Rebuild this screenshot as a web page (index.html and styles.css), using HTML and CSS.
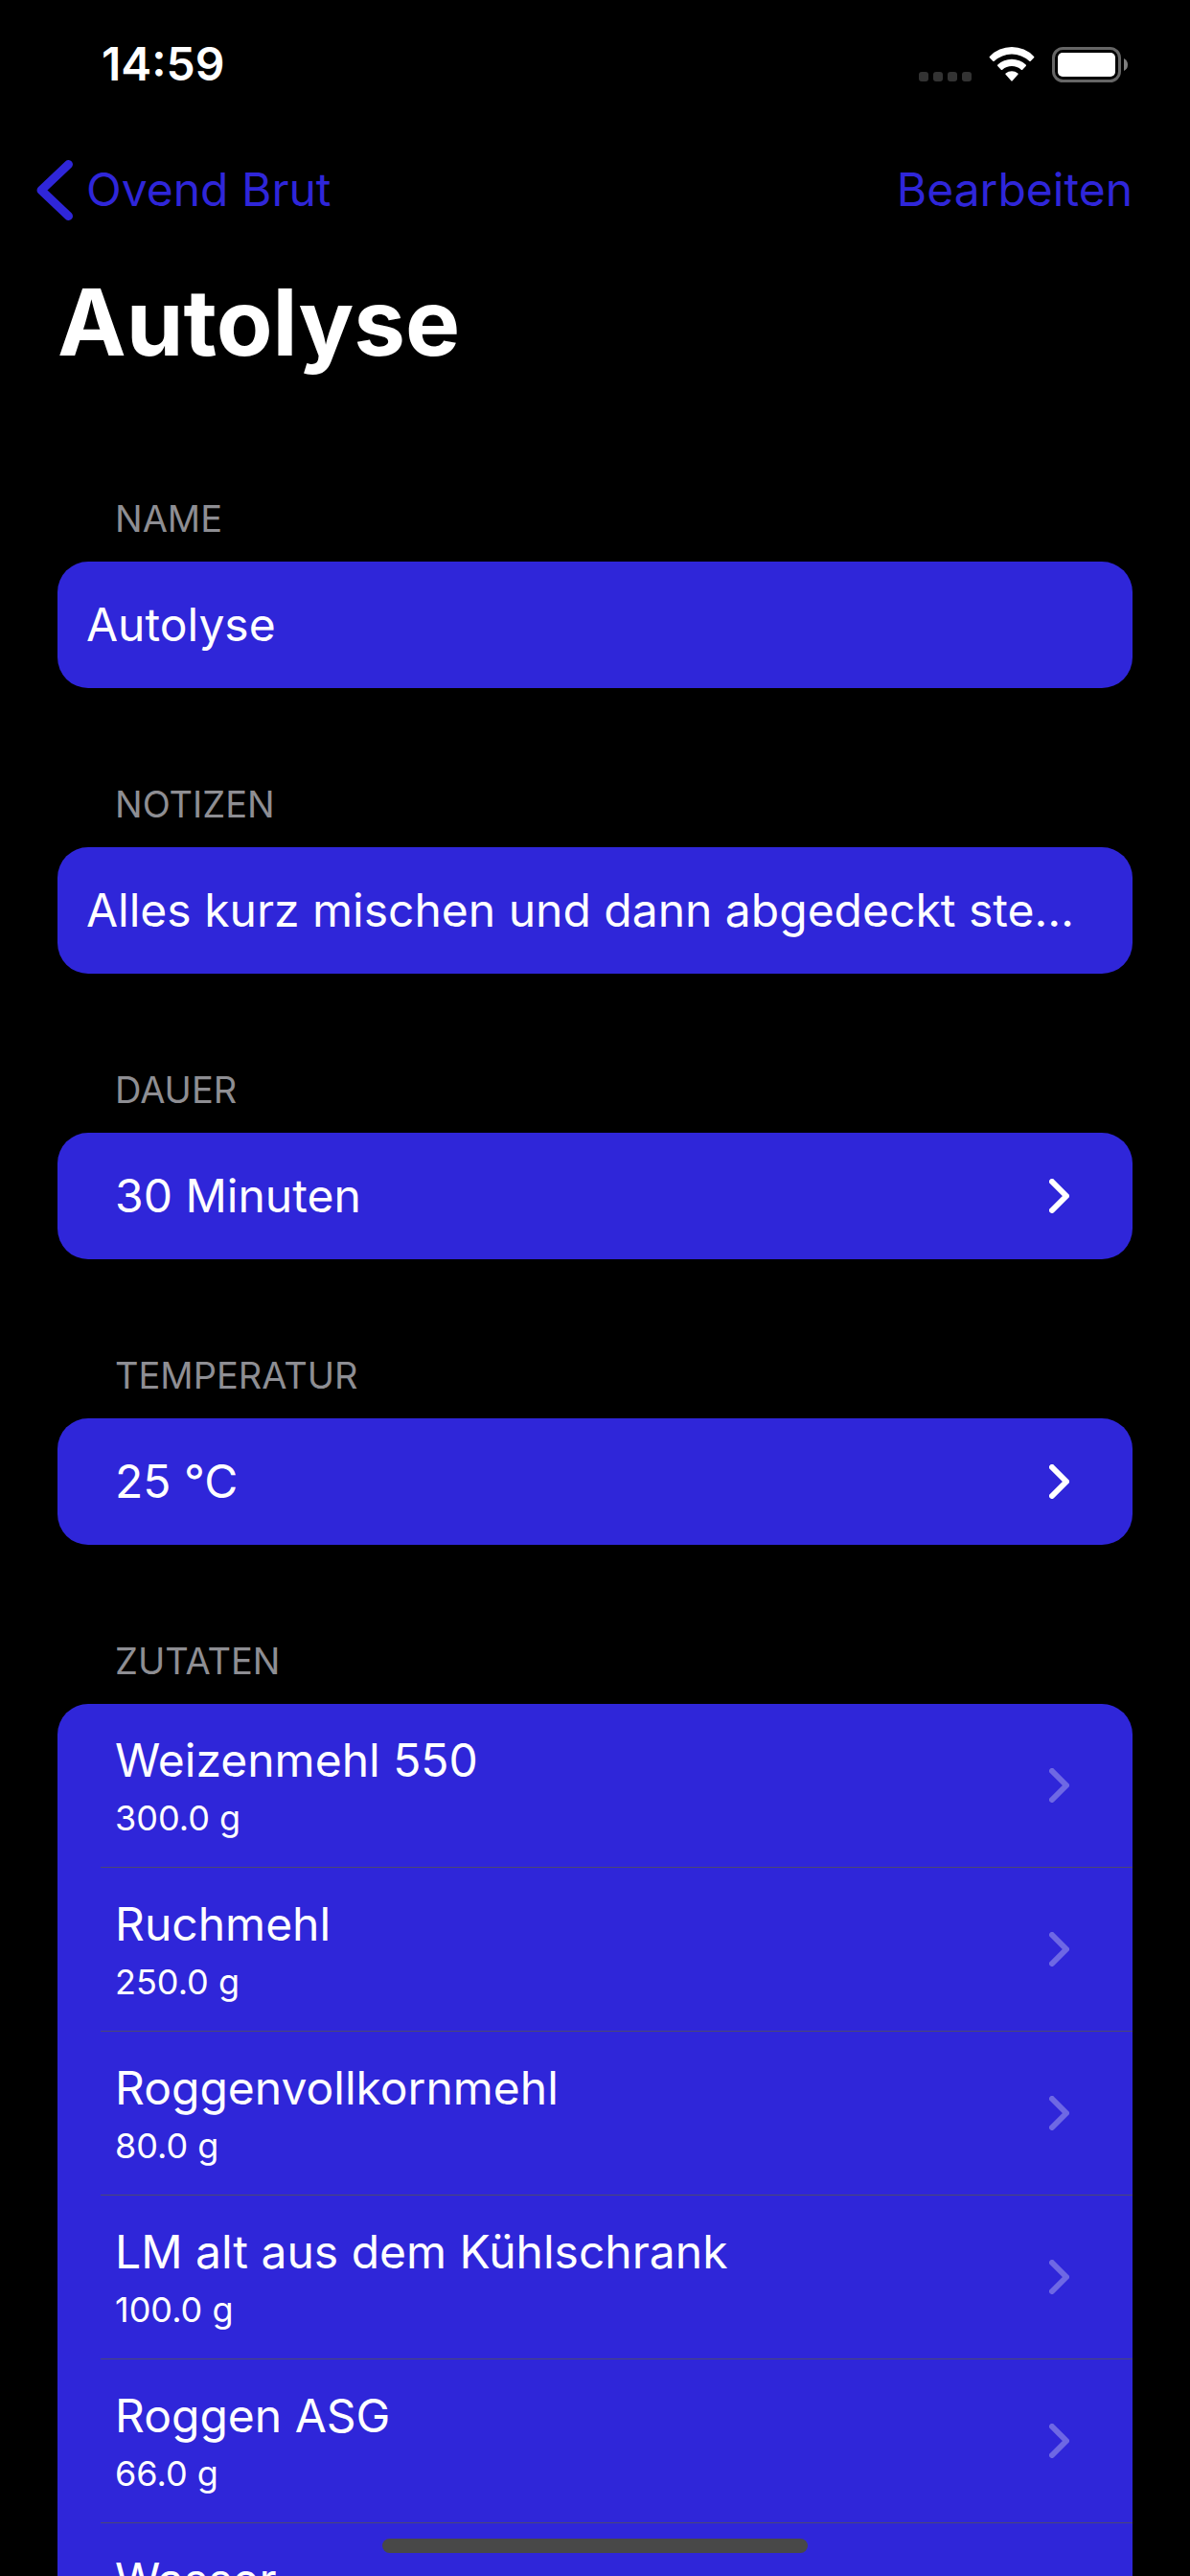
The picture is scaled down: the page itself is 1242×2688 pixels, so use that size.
FILE: index.html
```html
<!DOCTYPE html>
<html lang="de">
<head>
<meta charset="utf-8">
<meta name="viewport" content="width=device-width, initial-scale=1">
<title>Autolyse</title>
<link rel="stylesheet" href="styles.css">
</head>
<body>
<svg class="defs" aria-hidden="true">
  <symbol id="chevron" viewBox="0 0 21 36"><path d="M3 3 18 18 3 33"/></symbol>
</svg>
<div class="screen">
  <div class="status">
    <time class="clock">14:59</time>
    <div class="indicators">
      <svg class="cell" viewBox="0 0 55 36" aria-hidden="true">
        <rect x="0" y="26" width="10" height="10" rx="3"/><rect x="15" y="26" width="10" height="10" rx="3"/><rect x="30" y="26" width="10" height="10" rx="3"/><rect x="45" y="26" width="10" height="10" rx="3"/>
      </svg>
      <svg class="wifi" viewBox="0 0 48 36" aria-hidden="true">
        <path d="M.9 9.9A32 32 0 0 1 47.1 9.9Q47.8 10.6 47.1 11.3L43.7 14.7Q43 15.3 42.3 14.7A27 27 0 0 0 5.7 14.7Q5 15.3 4.3 14.7L.9 11.3Q.2 10.6.9 9.9Z"/>
        <path d="M9.3 18.6A21.5 21.5 0 0 1 38.7 18.6Q39.4 19.3 38.7 20L35.2 23.8Q34.5 24.4 33.8 23.8A14.6 14.6 0 0 0 14.2 23.8Q13.5 24.4 12.8 23.8L9.3 20Q8.6 19.3 9.3 18.6Z"/>
        <path d="M17.6 27.4A10.5 10.5 0 0 1 30.4 27.4Q31.1 28.1 30.4 28.8L24.7 35.3Q24 36 23.3 35.3L17.6 28.8Q16.9 28.1 17.6 27.4Z"/>
      </svg>
      <svg class="battery" viewBox="0 0 79 37" aria-hidden="true">
        <rect class="shell" x="1.5" y="1.5" width="69" height="34" rx="10"/>
        <rect class="charge" x="6" y="6" width="60" height="25" rx="5"/>
        <path class="tip" d="M75 12Q79 14 79 18.5T75 25Z"/>
      </svg>
    </div>
  </div>

  <nav class="nav">
    <a class="back" href="#rezept">
      <svg class="back-icon" viewBox="0 0 38 63" aria-hidden="true"><path d="M33.5 4.500 5 31.500 33.500 58.500"/></svg>
      <span>Ovend Brut</span>
    </a>
    <button class="edit" type="button">Bearbeiten</button>
  </nav>

  <main class="content">
    <h1 class="title">Autolyse</h1>

    <section class="group">
      <label class="heading" for="name">NAME</label>
      <input class="card field" id="name" type="text" value="Autolyse">
    </section>

    <section class="group">
      <label class="heading" for="notes">NOTIZEN</label>
      <input class="card field" id="notes" type="text" value="Alles kurz mischen und dann abgedeckt ste…">
    </section>

    <section class="group">
      <h2 class="heading">DAUER</h2>
      <button class="card picker" type="button">30 Minuten<svg class="chevron" aria-hidden="true"><use href="#chevron"/></svg></button>
    </section>

    <section class="group">
      <h2 class="heading">TEMPERATUR</h2>
      <button class="card picker" type="button">25 °C<svg class="chevron" aria-hidden="true"><use href="#chevron"/></svg></button>
    </section>

    <section class="group">
      <h2 class="heading">ZUTATEN</h2>
      <ul class="card list">
        <li class="item"><a class="row" href="#weizenmehl"><span class="info"><span class="label">Weizenmehl 550</span><span class="amount">300.0 g</span></span><svg class="chevron faint" aria-hidden="true"><use href="#chevron"/></svg></a></li>
        <li class="item"><a class="row" href="#ruchmehl"><span class="info"><span class="label">Ruchmehl</span><span class="amount">250.0 g</span></span><svg class="chevron faint" aria-hidden="true"><use href="#chevron"/></svg></a></li>
        <li class="item"><a class="row" href="#roggenvollkornmehl"><span class="info"><span class="label">Roggenvollkornmehl</span><span class="amount">80.0 g</span></span><svg class="chevron faint" aria-hidden="true"><use href="#chevron"/></svg></a></li>
        <li class="item"><a class="row" href="#lm"><span class="info"><span class="label">LM alt aus dem Kühlschrank</span><span class="amount">100.0 g</span></span><svg class="chevron faint" aria-hidden="true"><use href="#chevron"/></svg></a></li>
        <li class="item"><a class="row" href="#roggen-asg"><span class="info"><span class="label">Roggen ASG</span><span class="amount">66.0 g</span></span><svg class="chevron faint" aria-hidden="true"><use href="#chevron"/></svg></a></li>
        <li class="item"><a class="row" href="#wasser"><span class="info"><span class="label">Wasser</span></span></a></li>
      </ul>
    </section>
  </main>
  <div class="home-indicator"></div>
</div>
</body>
</html>
```
FILE: styles.css
```css
:root {
  --accent: #2f26d9;
  --margin: 60px;
}

* {
  box-sizing: border-box;
}

body {
  margin: 0;
  background: #000;
  color: #fff;
  font: 400 48px/60px Inter, "Liberation Sans", sans-serif;
}

button,
input {
  font: inherit;
  color: inherit;
  border: 0;
}

a {
  color: inherit;
  text-decoration: none;
}

.defs {
  display: none;
}

.screen {
  position: relative;
  display: flex;
  flex-direction: column;
  height: 100vh;
  overflow: hidden;
}

/* Status bar */
.status {
  display: flex;
  flex: none;
  align-items: center;
  justify-content: space-between;
  height: 132px;
  padding: 2px 65px 0 106px;
}

.clock {
  font-weight: 600;
}

.indicators {
  display: flex;
  gap: 18px;
}

.cell {
  width: 55px;
  height: 36px;
  fill: #333;
}

.wifi {
  width: 48px;
  height: 36px;
  fill: #fff;
}

.battery {
  width: 79px;
  height: 37px;
}

.shell {
  fill: none;
  stroke: #666;
  stroke-width: 3;
}

.charge {
  fill: #fff;
}

.tip {
  fill: #808080;
}

/* Navigation bar */
.nav {
  display: flex;
  flex: none;
  align-items: center;
  justify-content: space-between;
  height: 132px;
  padding: 0 var(--margin) 0 38px;
  color: var(--accent);
}

.back {
  display: flex;
  align-items: center;
  gap: 14px;
}

.back-icon {
  width: 38px;
  height: 63px;
  fill: none;
  stroke: currentColor;
  stroke-width: 9;
  stroke-linecap: round;
  stroke-linejoin: round;
}

.edit {
  padding: 0;
  background: none;
}

/* Content */
.content {
  flex: 1;
  min-height: 0;
  padding: 12px var(--margin) 0;
  overflow-y: auto;
  scrollbar-width: none;
}

.title {
  margin: 0 0 24px;
  font-size: 96px;
  font-weight: 700;
  line-height: 120px;
}

.group {
  padding-top: 87px;
}

.heading {
  display: block;
  margin: 0;
  padding: 10px 60px 21px;
  color: #8e8e93;
  font-size: 38px;
  font-weight: 400;
  line-height: 48px;
}

.card {
  display: flex;
  width: 100%;
  border-radius: 32px;
  background: var(--accent);
}

.field {
  height: 132px;
  padding: 0 30px 2px;
}

.field:focus {
  outline: none;
}

.picker {
  align-items: center;
  justify-content: space-between;
  height: 132px;
  padding: 0 66px 0 60px;
  text-align: left;
}

.chevron {
  flex: none;
  width: 21px;
  height: 36px;
  fill: none;
  stroke: #fff;
  stroke-width: 6;
  stroke-linecap: round;
  stroke-linejoin: round;
}

.faint {
  opacity: 0.3;
}

.list {
  flex-direction: column;
  margin: 0;
  padding: 0;
  list-style: none;
}

.item {
  padding-left: 45px;
}

.row {
  display: flex;
  align-items: center;
  justify-content: space-between;
  min-height: 171px;
  padding: 0 66px 0 15px;
  border-bottom: 1px solid #4c4873;
}

.info {
  display: flex;
  flex-direction: column;
  gap: 8px;
  min-height: 112px;
}

.amount {
  font-size: 36px;
  line-height: 44px;
}

.home-indicator {
  position: absolute;
  bottom: 24px;
  left: 50%;
  width: 444px;
  height: 15px;
  margin-left: -222px;
  border-radius: 8px;
  background: #484848;
}
```
